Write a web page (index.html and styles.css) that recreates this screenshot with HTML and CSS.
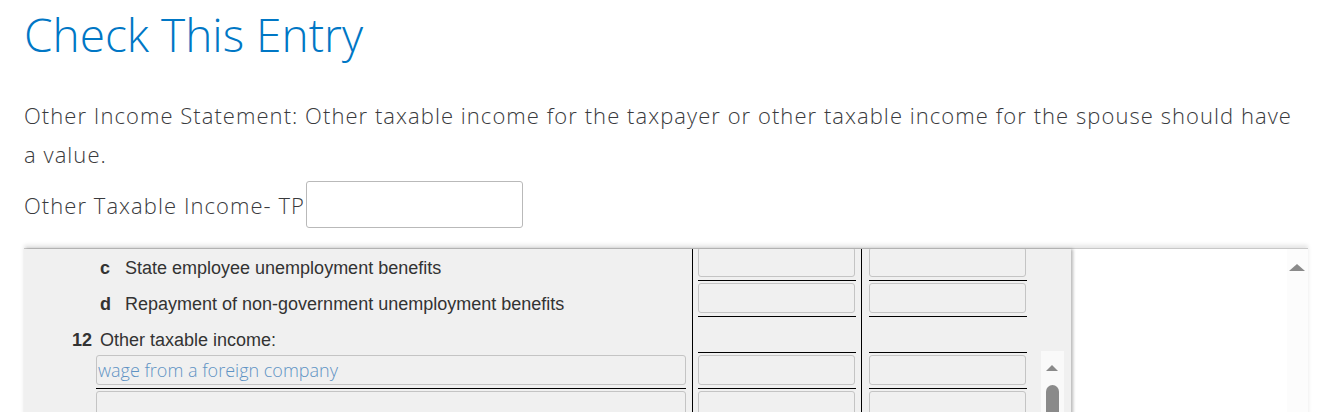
FILE: index.html
```html
<!DOCTYPE html>
<html>
<head>
<meta charset="utf-8">
<link rel="stylesheet" href="styles.css">
</head>
<body>
<div class="page">
  <h1 class="title">Check This Entry</h1>
  <p class="message">Other Income Statement: Other taxable income for the taxpayer or other taxable income for the spouse should have a value.</p>
  <div class="field">
    <label class="field-label">Other Taxable Income- TP</label>
    <input class="field-input" type="text">
  </div>
  <div class="frame">
    <div class="form-panel">
      <div class="rows">
        <div class="row">
          <div class="label"><span class="sub">c</span>State employee unemployment benefits</div>
          <div class="col col1"><div class="box"></div></div>
          <div class="col col2"><div class="box"></div></div>
        </div>
        <div class="row">
          <div class="label"><span class="sub">d</span>Repayment of non-government unemployment benefits</div>
          <div class="col col1"><div class="box"></div></div>
          <div class="col col2"><div class="box"></div></div>
        </div>
        <div class="row">
          <div class="label"><span class="num">12</span>Other taxable income:</div>
          <div class="col col1"><div class="box blank"></div></div>
          <div class="col col2"><div class="box blank"></div></div>
        </div>
        <div class="row">
          <div class="label entry"><div class="entry-box">wage from a foreign company</div></div>
          <div class="col col1"><div class="box"></div></div>
          <div class="col col2"><div class="box"></div></div>
        </div>
        <div class="row">
          <div class="label entry"><div class="entry-box"></div></div>
          <div class="col col1"><div class="box"></div></div>
          <div class="col col2"><div class="box"></div></div>
        </div>
      </div>
      <div class="inner-scroll">
        <div class="arrow-up small"></div>
        <div class="thumb"></div>
      </div>
    </div>
    <div class="side">
      <div class="side-scroll">
        <div class="arrow-up"></div>
      </div>
    </div>
  </div>
</div>
</body>
</html>
```
FILE: styles.css
```css
html, body {
  margin: 0;
  padding: 0;
  background: #ffffff;
  overflow: hidden;
}
.page {
  padding: 0 15px 0 24px;
  font-family: "Open Sans", "Lato", sans-serif;
  font-weight: 300;
  color: #393a3d;
}
.title {
  margin: 0;
  padding-top: 8px;
  font-size: 46px;
  line-height: 52px;
  font-weight: 300;
  color: #0077c5;
}
.message {
  margin: 36px 0 0 0;
  padding-right: 5px;
  font-size: 22px;
  line-height: 39px;
  letter-spacing: 1.05px;
}
.field {
  display: flex;
  align-items: center;
  margin-top: 7px;
}
.field-label {
  font-size: 22px;
  line-height: 28px;
  letter-spacing: 1.05px;
}
.field-input {
  width: 217px;
  height: 47px;
  box-sizing: border-box;
  border: 1px solid #b9b9b9;
  border-radius: 3px;
  margin: 0 0 0 1px;
  padding: 0;
  background: #fff;
}
.frame {
  margin-top: 20px;
  height: 170px;
  display: flex;
  border-top: 1px solid #c8c8c8;
  box-shadow: 0 -3px 4px rgba(0, 0, 0, 0.10);
}
.form-panel {
  position: relative;
  width: 1047px;
  background: #f0f0f0;
  overflow: hidden;
  box-shadow: 2px 0 3px rgba(0, 0, 0, 0.28);
  z-index: 1;
}
.rows {
  margin-top: -4px;
}
.row {
  display: grid;
  grid-template-columns: 668px 169px 169px;
  height: 36px;
  font-family: "Liberation Sans", Arial, sans-serif;
  font-weight: 400;
  font-size: 18px;
  color: #333;
}
.label {
  padding-top: 13px;
  line-height: 20px;
  padding-left: 76px;
}
.sub {
  display: inline-block;
  width: 25px;
  font-weight: 700;
}
.num {
  display: inline-block;
  width: 68px;
  margin-left: -76px;
  margin-right: 8px;
  text-align: right;
  font-weight: 700;
}
.label.entry {
  padding: 2px 0 0 72px;
}
.entry-box {
  width: 590px;
  height: 30px;
  box-sizing: border-box;
  border: 1px solid #c4c4c4;
  border-radius: 3px;
  font-family: "Open Sans", "Lato", sans-serif;
  font-weight: 300;
  font-size: 18px;
  line-height: 28px;
  padding-left: 1px;
  color: #5f93c4;
  margin-bottom: 3px;
}
.label.entry::after {
  content: "";
  display: block;
  width: 590px;
  height: 1px;
  background: #000;
}
.col {
  border-left: 1px solid #000;
  padding-top: 2px;
}
.col1 {
  padding-left: 5px;
}
.col2 {
  padding-left: 7px;
}
.box {
  width: 157px;
  height: 30px;
  box-sizing: border-box;
  border: 1px solid #c4c4c4;
  border-radius: 3px;
  margin-bottom: 3px;
}
.box.blank {
  border-color: transparent;
}
.col::after {
  content: "";
  display: block;
  width: 158px;
  height: 1px;
  background: #000;
}
.inner-scroll {
  position: absolute;
  left: 1017px;
  top: 102px;
  width: 23px;
  height: 80px;
  background: #f9f9f9;
}
.arrow-up {
  width: 0;
  height: 0;
  border-left: 8px solid transparent;
  border-right: 8px solid transparent;
  border-bottom: 7px solid #8a8a8a;
}
.arrow-up.small {
  margin: 14px 0 0 5px;
  border-left-width: 6px;
  border-right-width: 6px;
  border-bottom-width: 6px;
}
.thumb {
  margin: 14px 0 0 5px;
  width: 13px;
  height: 40px;
  border-radius: 7px 7px 0 0;
  background: #8a8a8a;
}
.side {
  flex: 1;
  display: flex;
  justify-content: flex-end;
  background: #fff;
}
.side-scroll {
  width: 21px;
  background: #fcfcfc;
  padding-top: 15px;
  box-sizing: border-box;
}
.side-scroll .arrow-up {
  margin-left: 2px;
}
```
